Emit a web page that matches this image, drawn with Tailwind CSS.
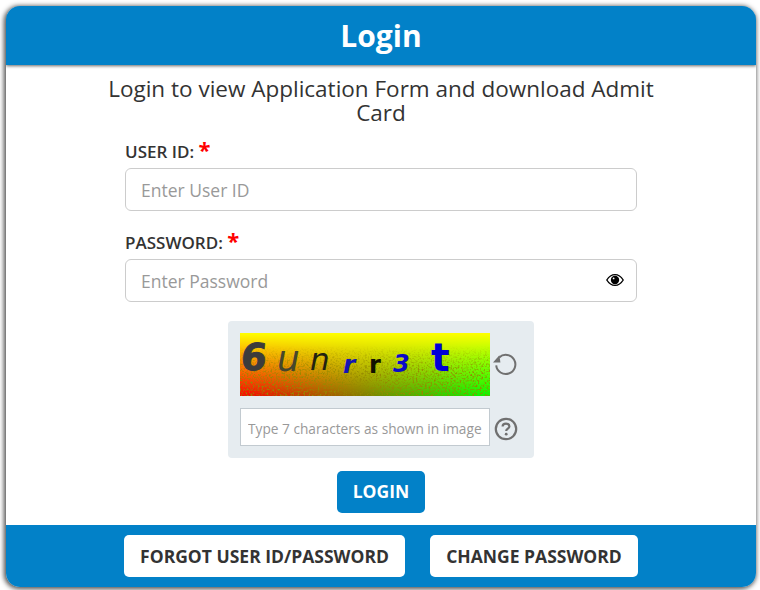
<!DOCTYPE html>
<html lang="en">
<head>
<meta charset="UTF-8">
<title>Login</title>
<script src="https://cdn.jsdelivr.net/npm/@tailwindcss/browser@4"></script>
</head>
<body class="bg-white font-['Open_Sans',sans-serif] text-[#333333]">
<div class="w-[760px] h-[590px] pt-[6px] pl-[6px] overflow-hidden">
  <div class="w-[750px] h-[581px] flex flex-col bg-white rounded-[14px] overflow-hidden shadow-[-1px_1px_5px_1px_rgba(0,0,0,0.7)]">
    <!-- Header -->
    <div class="h-[59px] shrink-0 bg-[#0281c8] flex items-center justify-center pt-[1px] shadow-[0_1px_3px_rgba(0,0,0,0.6)]">
      <h1 class="text-[30px] leading-[36px] font-bold text-white">Login</h1>
    </div>
    <!-- Form -->
    <div class="flex-1 flex flex-col items-center">
      <p class="w-[560px] mt-[12px] text-center text-[22.5px] leading-[24px]">Login to view Application Form and download Admit Card</p>
      <div class="w-[512px] mt-[11px]">
        <label class="block h-[32px] text-[17px] leading-[32px] font-semibold">USER ID: <span class="text-[22px] leading-[20px] font-bold text-[#ff0000]">*</span></label>
        <input type="text" placeholder="Enter User ID" class="block w-full h-[43px] px-[15px] border border-[#cccccc] rounded-[6px] text-[17.5px] placeholder:text-[#999999] bg-white">
        <label class="block h-[32px] mt-[16px] text-[17px] leading-[32px] font-semibold">PASSWORD: <span class="text-[22px] leading-[20px] font-bold text-[#ff0000]">*</span></label>
        <div class="relative">
          <input type="password" placeholder="Enter Password" class="block w-full h-[43px] px-[15px] border border-[#cccccc] rounded-[6px] text-[17.5px] placeholder:text-[#999999] bg-white">
          <svg class="absolute right-[13px] top-[14px] w-[18px] h-[14px]" viewBox="0 0 18 14">
            <path d="M0.8 7 C3.5 2.6 6 1.6 9 1.6 C12 1.6 14.5 2.6 17.2 7 C14.5 11.4 12 12.4 9 12.4 C6 12.4 3.5 11.4 0.8 7 Z" fill="#fff" stroke="#000" stroke-width="1.4"/>
            <circle cx="9" cy="7" r="4.2" fill="#000"/>
            <circle cx="7.6" cy="5.4" r="0.9" fill="#fff"/>
          </svg>
        </div>
      </div>
      <!-- Captcha -->
      <div class="w-[306px] h-[137px] mt-[19px] p-[12px] bg-[#e6ecf0] rounded-[4px]">
        <div class="flex items-center gap-[2px]">
          <div class="relative w-[250px] h-[63px] overflow-hidden bg-[linear-gradient(to_bottom,#ffff00_0%,rgba(255,255,0,0)_100%),linear-gradient(to_right,#ff0000,#00ff00)]">
            <svg class="absolute inset-0 w-full h-full" viewBox="0 0 250 63">
              <filter id="grain"><feTurbulence type="fractalNoise" baseFrequency="0.55" numOctaves="2" seed="4"/><feColorMatrix values="0 0 0 0 0.3  0 0 0 0 0.25  0 0 0 0 0  0 0 0 3.2 -1.5"/></filter>
              <linearGradient id="fade" x1="0" y1="0" x2="0" y2="1"><stop offset="0.2" stop-color="#fff" stop-opacity="0"/><stop offset="0.65" stop-color="#fff"/></linearGradient>
              <mask id="grainMask"><rect width="250" height="63" fill="url(#fade)"/></mask>
              <rect width="250" height="63" filter="url(#grain)" mask="url(#grainMask)"/>
            </svg>
            <div class="absolute inset-0 font-['DejaVu_Sans',sans-serif]">
              <span class="absolute left-[1px] top-[3px] text-[37px] leading-[44px] font-bold -skew-x-6 text-[#3c3c3c] [-webkit-text-stroke:1px_#3c3c3c]">6</span>
              <span class="absolute left-[37px] top-[6px] text-[36px] leading-[40px] italic text-[#46462c]">u</span>
              <span class="absolute left-[70px] top-[8px] text-[31px] leading-[36px] italic text-[#222211]">n</span>
              <span class="absolute left-[103px] top-[17px] text-[25px] leading-[30px] font-bold italic text-[#1414b4]">r</span>
              <span class="absolute left-[129px] top-[17px] text-[24px] leading-[30px] font-bold text-[#111100]">r</span>
              <span class="absolute left-[153px] top-[16px] text-[24px] leading-[30px] font-bold italic text-[#0a0ac8]">3</span>
              <span class="absolute left-[191px] top-[2px] text-[39px] leading-[46px] font-bold text-[#0000d8]">t</span>
            </div>
          </div>
          <svg class="w-[26px] h-[26px] mb-[3px]" viewBox="0 0 26 26" fill="none">
            <path d="M7.2 7.4 A9.6 9.6 0 1 1 4.2 15.4" stroke="#707070" stroke-width="2"/>
            <path d="M1 12.4 L8.4 12.6 L7.4 5.2 Z" fill="#707070"/>
          </svg>
        </div>
        <div class="flex items-center gap-[4px] mt-[12px]">
          <input type="text" placeholder="Type 7 characters as shown in image" class="block w-[250px] h-[38px] pl-[7px] pr-0 pt-[2px] border border-[#c2cad0] bg-white text-[13.7px] placeholder:text-[#999999]">
          <svg class="w-[24px] h-[24px] mt-[4px]" viewBox="0 0 24 24" fill="none">
            <circle cx="12" cy="12" r="10.2" stroke="#707070" stroke-width="2.2"/>
            <path d="M8.6 9.6 C8.6 7.6 10 6.6 12 6.6 C14 6.6 15.4 7.7 15.4 9.4 C15.4 11.6 12.2 11.6 12.2 14" stroke="#707070" stroke-width="2.2"/>
            <circle cx="12.2" cy="17.2" r="1.4" fill="#707070"/>
          </svg>
        </div>
      </div>
      <button class="w-[88px] h-[42px] mt-[13px] pb-[2px] bg-[#0281c8] rounded-[5px] text-white text-[17.5px] font-bold">LOGIN</button>
    </div>
    <!-- Footer -->
    <div class="h-[62px] shrink-0 bg-[#0281c8] flex items-center justify-center gap-[25px]">
      <button class="w-[281px] h-[42px] bg-white rounded-[5px] text-[17.5px] font-bold">FORGOT USER ID/PASSWORD</button>
      <button class="w-[208px] h-[42px] bg-white rounded-[5px] text-[17.5px] font-bold">CHANGE PASSWORD</button>
    </div>
  </div>
</div>
</body>
</html>
